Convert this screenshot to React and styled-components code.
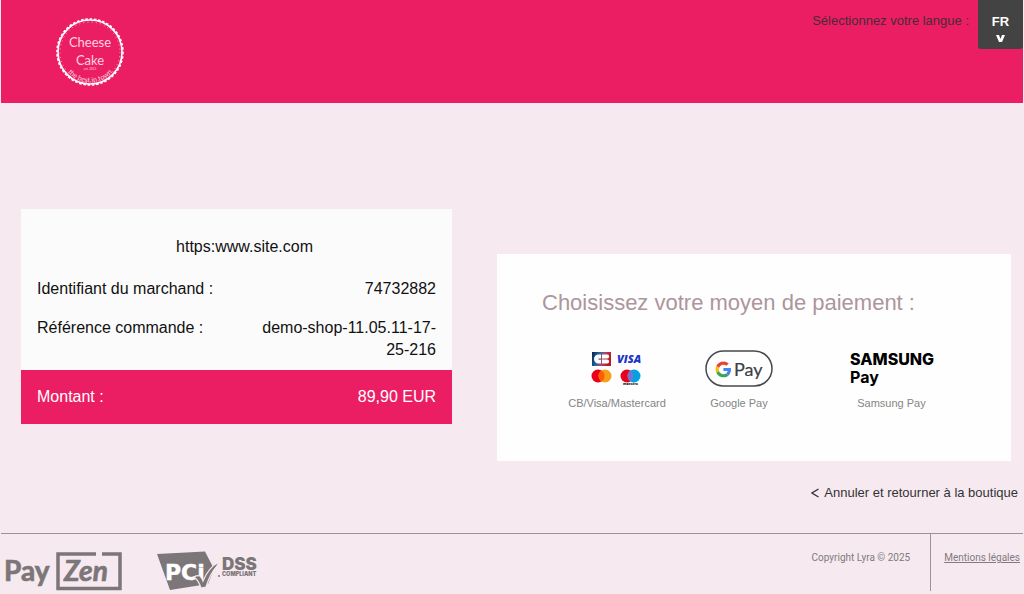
import React from "react";
import styled, { createGlobalStyle } from "styled-components";

const PINK = "#ec1e63";
const GREY = "#7d7679";

const GlobalStyle = createGlobalStyle`
  *, *::before, *::after { box-sizing: border-box; }
  body {
    margin: 0;
    background: #f6eaf0;
    color: #111;
    font-family: "Liberation Sans", Arial, sans-serif;
  }
  button { font: inherit; border: 0; padding: 0; background: none; cursor: pointer; }
  svg { display: block; }
`;

const Page = styled.div`
  display: flex;
  flex-direction: column;
  min-height: 100vh;
  padding: 0 1px;
`;

const Header = styled.header`
  display: flex;
  align-items: flex-start;
  justify-content: space-between;
  min-height: 103px;
  padding-left: 54px;
  background: ${PINK};
`;

const ShopLogo = styled.svg`
  width: 70px;
  height: 70px;
  margin-top: 17px;
`;

const LanguagePicker = styled.div`
  display: flex;
  align-items: flex-start;
  gap: 9px;
`;

const LanguageLabel = styled.span`
  padding-top: 12px;
  font-size: 13px;
  line-height: 18px;
  color: #4a2a38;
`;

const LanguageButton = styled.button`
  display: flex;
  flex-direction: column;
  align-items: center;
  gap: 4px;
  width: 45px;
  height: 49px;
  padding-top: 13px;
  border-radius: 0 0 3px 3px;
  background: #434343;
  color: #fff;
  font-size: 13px;
  font-weight: bold;
  line-height: 17px;
`;

const Main = styled.main`
  flex: 1;
  padding: 106px 12px 0 20px;
`;

const Columns = styled.div`
  display: grid;
  grid-template-columns: 431fr 514fr;
  align-items: start;
  gap: 45px;
`;

const OrderCard = styled.section`
  background: #fbfbfb;
  font-size: 16px;
  line-height: 22px;
`;

const OrderDetails = styled.div`
  display: flex;
  flex-direction: column;
  gap: 17px;
  padding: 27px 16px 9px;
`;

const ShopName = styled.h1`
  margin: 0 0 3px;
  padding-left: 16px;
  font-size: inherit;
  font-weight: normal;
  text-align: center;
`;

const OrderRow = styled.dl`
  display: flex;
  justify-content: space-between;
  margin: 0;
`;

const Term = styled.dt``;

const Value = styled.dd`
  width: 45%;
  margin: 0;
  text-align: right;
`;

const AmountBar = styled.div`
  padding: 16px;
  background: ${PINK};
  color: #fff;
`;

const PaymentCard = styled.section`
  min-height: 207px;
  margin-top: 45px;
  padding: 36px 28px 40px 45px;
  background: #fefefe;
`;

const PaymentTitle = styled.h2`
  margin: 0;
  color: #ad959c;
  font-size: 22px;
  font-weight: normal;
  line-height: 26px;
`;

const Methods = styled.div`
  display: grid;
  grid-template-columns: 2fr 2fr 3fr;
  margin-top: 34px;
  padding-left: 14px;
`;

const Method = styled.button`
  display: flex;
  flex-direction: column;
  align-items: center;
  gap: 8px;
  color: #858585;
  font-size: 11px;
  line-height: 16px;
`;

const CancelRow = styled.div`
  display: flex;
  justify-content: flex-end;
  padding: 21px 5px 30px;
`;

const CancelLink = styled.a`
  display: flex;
  align-items: center;
  gap: 5px;
  color: #333;
  font-size: 13px;
  line-height: 21px;
  text-decoration: none;
`;

const Footer = styled.footer`
  display: flex;
  justify-content: space-between;
  min-height: 61px;
  border-top: 1px solid #9d9297;
`;

const Badges = styled.div`
  display: flex;
  gap: 34px;
  padding: 16px 0 0 2px;
`;

const Legal = styled.div`
  display: flex;
  align-items: flex-start;
  color: #817a7e;
  font-family: Roboto, "Liberation Sans", sans-serif;
  font-size: 10px;
  line-height: 16px;
`;

const Copyright = styled.span`
  padding: 16px 20px 0 0;
`;

const LegalLinkCell = styled.div`
  height: 57px;
  padding: 16px 3px 0 13px;
  border-left: 1px solid #9d9297;
`;

const LegalLink = styled.a`
  color: inherit;
`;

function CheeseCakeLogo() {
  return (
    <ShopLogo viewBox="0 0 70 70" role="img" aria-label="Cheese Cake">
      <g fill="none" stroke="#fff">
        <circle cx="35" cy="35" r="32" strokeWidth="1.6" />
        <circle cx="35" cy="35" r="33" strokeWidth="1.6" strokeDasharray="2.6 1.7" />
        <circle cx="35" cy="35" r="30" strokeWidth="1" strokeDasharray="1 3.2" opacity=".6" />
      </g>
      <g fill="#ffd3e0" textAnchor="middle" fontFamily="Lato, sans-serif">
        <text x="35" y="30" fontSize="13">Cheese</text>
        <text x="35" y="48" fontSize="13">Cake</text>
        <text x="35" y="53" fontSize="3">est. 2013</text>
        <path id="motto" d="M7 44a29 29 0 0 0 56 0" fill="none" />
        <text fontSize="7">
          <textPath href="#motto" startOffset="50%">the best in town</textPath>
        </text>
      </g>
    </ShopLogo>
  );
}

function CardsLogo() {
  return (
    <svg width="52" height="37" viewBox="0 0 52 37" aria-hidden="true">
      <defs>
        <linearGradient id="cb" x1="0" y1="0" x2="1" y2=".25">
          <stop offset="0" stopColor="#07204f" />
          <stop offset=".4" stopColor="#2866a4" />
          <stop offset=".65" stopColor="#a84b68" />
          <stop offset="1" stopColor="#bd1722" />
        </linearGradient>
      </defs>
      <rect x="1" y="2" width="19" height="14" fill="url(#cb)" />
      <path
        d="M10 4.500H7.500a4.500 4.500 0 0 0 0 9H10V9.700H7.500V8.400H10ZM11 4.500h5.200a2 2 0 0 1 0 4H11ZM11 9.500h5.200a2 2 0 0 1 0 4H11Z"
        fill="#fff"
      />
      <text x="26" y="13" fontFamily="Open Sans, sans-serif" fontSize="11" fontWeight="800" fontStyle="italic" fill="#1a34c8">
        VISA
      </text>
      <circle cx="7" cy="26" r="6.500" fill="#eb001b" />
      <circle cx="14" cy="26" r="6.500" fill="#f79e1b" />
      <path d="M10.500 20.500a6.500 6.500 0 0 1 0 11a6.500 6.500 0 0 1 0-11Z" fill="#ff5f00" />
      <circle cx="36" cy="26" r="6.500" fill="#eb001b" />
      <circle cx="43" cy="26" r="6.500" fill="#00a2e5" />
      <path d="M39.500 20.500a6.500 6.500 0 0 1 0 11a6.500 6.500 0 0 1 0-11Z" fill="#7375cf" />
      <text x="39.500" y="35" textAnchor="middle" fontFamily="Open Sans, sans-serif" fontSize="3.500" fontWeight="800" fill="#222">
        maestro
      </text>
    </svg>
  );
}

function GooglePayLogo() {
  return (
    <svg width="68" height="37" viewBox="0 0 68 37" aria-hidden="true">
      <rect x="1" y="1" width="66" height="35" rx="17.500" fill="#fff" stroke="#46494d" strokeWidth="1.500" />
      <g transform="translate(10.500 11.500) scale(.33)">
        <path fill="#ea4335" d="M24 9.500c3.540 0 6.710 1.220 9.210 3.600l6.850-6.850C35.900 2.380 30.470 0 24 0 14.620 0 6.510 5.380 2.560 13.220l7.980 6.190C12.430 13.720 17.740 9.500 24 9.500z" />
        <path fill="#4285f4" d="M46.980 24.550c0-1.570-.15-3.090-.38-4.550H24v9.020h12.940c-.58 2.960-2.260 5.480-4.780 7.180l7.730 6c4.510-4.180 7.090-10.360 7.090-17.650z" />
        <path fill="#fbbc05" d="M10.530 28.590c-.48-1.450-.76-2.990-.76-4.590s.27-3.140.76-4.590l-7.980-6.190C.92 16.460 0 20.120 0 24s.92 7.540 2.560 10.780l7.970-6.190z" />
        <path fill="#34a853" d="M24 48c6.480 0 11.930-2.130 15.890-5.810l-7.730-6c-2.150 1.450-4.920 2.300-8.160 2.300-6.260 0-11.570-4.220-13.470-9.910l-7.980 6.190C6.510 42.620 14.620 48 24 48z" />
      </g>
      <text x="29" y="26" fontFamily="Lato, sans-serif" fontSize="18" fill="#3c4043" stroke="#3c4043" strokeWidth=".2">
        Pay
      </text>
    </svg>
  );
}

function SamsungPayLogo() {
  return (
    <svg width="84" height="37" viewBox="0 0 84 37" aria-hidden="true">
      <g fill="#000" fontFamily="Inter, sans-serif">
        <text x="0" y="15" fontSize="16" fontWeight="800">SAMSUNG</text>
        <text x="0" y="33" fontSize="16" fontWeight="700">Pay</text>
      </g>
    </svg>
  );
}

function PayZenLogo() {
  return (
    <svg width="120" height="42" viewBox="0 0 120 42" role="img" aria-label="PayZen">
      <path d="M93 4H55V38.500H117V4H99" fill="none" stroke={GREY} strokeWidth="3.500" />
      <g fill={GREY} stroke={GREY} strokeWidth=".7" fontFamily="Lato, sans-serif" fontSize="28" fontWeight="700">
        <text x="1" y="31">Pay</text>
        <text x="61" y="31" fontStyle="italic">Zen</text>
      </g>
    </svg>
  );
}

function PciLogo() {
  return (
    <svg width="102" height="42" viewBox="0 0 102 42" role="img" aria-label="PCI DSS Compliant">
      <path d="M0 4 48 1.500 57 19 51 34 13 40Z" fill={GREY} />
      <text x="8" y="30" fontFamily="DejaVu Sans, sans-serif" fontSize="22" fontWeight="700" fill="#fff" stroke="#fff" strokeWidth=".4">
        PCi
      </text>
      <path
        d="M37 27q4-2 6-1 2 2 3 5 6-14 16-19l-2 4q-7 8-11 21l-5 1q-2-7-7-11Z"
        fill={GREY}
        stroke="#f6eaf0"
        strokeWidth="1.200"
      />
      <circle cx="62" cy="26" r="1" fill={GREY} />
      <g fill={GREY} fontFamily="Inter, sans-serif" fontWeight="900">
        <text x="65" y="20" fontSize="17">DSS</text>
        <text x="65" y="26" fontSize="5.500">COMPLIANT</text>
      </g>
    </svg>
  );
}

const orderRows = [
  ["Identifiant du marchand :", "74732882"],
  ["Référence commande :", "demo-shop-11.05.11-17-25-216"],
];

const methods = [
  ["CB/Visa/Mastercard", CardsLogo],
  ["Google Pay", GooglePayLogo],
  ["Samsung Pay", SamsungPayLogo],
];

export default function App() {
  return (
    <>
      <GlobalStyle />
      <Page>
        <Header>
          <CheeseCakeLogo />
          <LanguagePicker>
            <LanguageLabel id="language-label">Sélectionnez votre langue :</LanguageLabel>
            <LanguageButton type="button" id="language" aria-haspopup="menu" aria-labelledby="language-label language">
              <span>FR</span>
              <svg width="9" height="8" viewBox="0 0 9 8" aria-hidden="true">
                <path d="M0 1h3l1.500 4L6 1h3L6 8H3Z" fill="#fff" />
              </svg>
            </LanguageButton>
          </LanguagePicker>
        </Header>

        <Main>
          <Columns>
            <OrderCard>
              <OrderDetails>
                <ShopName>https:www.site.com</ShopName>
                {orderRows.map(([term, value]) => (
                  <OrderRow key={term}>
                    <Term>{term}</Term>
                    <Value>{value}</Value>
                  </OrderRow>
                ))}
              </OrderDetails>
              <AmountBar>
                <OrderRow>
                  <Term>Montant :</Term>
                  <Value>89,90 EUR</Value>
                </OrderRow>
              </AmountBar>
            </OrderCard>

            <PaymentCard>
              <PaymentTitle>Choisissez votre moyen de paiement :</PaymentTitle>
              <Methods>
                {methods.map(([name, Logo]) => (
                  <Method key={name} type="button">
                    <Logo />
                    <span>{name}</span>
                  </Method>
                ))}
              </Methods>
            </PaymentCard>
          </Columns>
        </Main>

        <CancelRow>
          <CancelLink href="#boutique">
            <svg width="8" height="10" viewBox="0 0 8 10" aria-hidden="true">
              <path d="M7.500 1 1 5l6.500 4" fill="none" stroke="#333" strokeWidth="1.400" />
            </svg>
            Annuler et retourner à la boutique
          </CancelLink>
        </CancelRow>

        <Footer>
          <Badges>
            <PayZenLogo />
            <PciLogo />
          </Badges>
          <Legal>
            <Copyright>Copyright Lyra © 2025</Copyright>
            <LegalLinkCell>
              <LegalLink href="#mentions">Mentions légales</LegalLink>
            </LegalLinkCell>
          </Legal>
        </Footer>
      </Page>
    </>
  );
}
